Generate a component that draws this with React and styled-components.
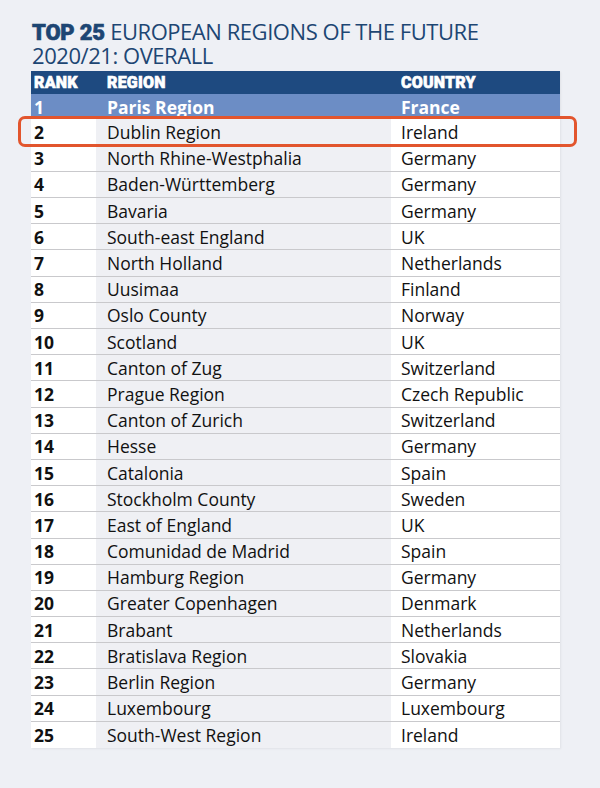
import React from 'react';
import styled, { createGlobalStyle } from 'styled-components';

const rows = [
  ['Dublin Region', 'Ireland'],
  ['North Rhine-Westphalia', 'Germany'],
  ['Baden-Württemberg', 'Germany'],
  ['Bavaria', 'Germany'],
  ['South-east England', 'UK'],
  ['North Holland', 'Netherlands'],
  ['Uusimaa', 'Finland'],
  ['Oslo County', 'Norway'],
  ['Scotland', 'UK'],
  ['Canton of Zug', 'Switzerland'],
  ['Prague Region', 'Czech Republic'],
  ['Canton of Zurich', 'Switzerland'],
  ['Hesse', 'Germany'],
  ['Catalonia', 'Spain'],
  ['Stockholm County', 'Sweden'],
  ['East of England', 'UK'],
  ['Comunidad de Madrid', 'Spain'],
  ['Hamburg Region', 'Germany'],
  ['Greater Copenhagen', 'Denmark'],
  ['Brabant', 'Netherlands'],
  ['Bratislava Region', 'Slovakia'],
  ['Berlin Region', 'Germany'],
  ['Luxembourg', 'Luxembourg'],
  ['South-West Region', 'Ireland'],
];

const GlobalStyle = createGlobalStyle`
  html, body {
    margin: 0;
    padding: 0;
    background: #eef0f5;
  }
`;

const App = () => {
  return (
    <Page>
      <GlobalStyle />
      <Title>
        <strong>TOP 25</strong> EUROPEAN REGIONS OF THE FUTURE
        <br />
        2020/21: OVERALL
      </Title>
      <Table>
        <thead>
          <HeadRow>
            <HeadCell>RANK</HeadCell>
            <HeadCell>REGION</HeadCell>
            <HeadCell>COUNTRY</HeadCell>
          </HeadRow>
        </thead>
        <tbody>
          <LeadRow>
            <RankCell>1</RankCell>
            <RegionCell>Paris Region</RegionCell>
            <CountryCell>France</CountryCell>
          </LeadRow>
          {rows.map(([region, country], i) => (
            <Row key={region} $highlight={i === 0}>
              <RankCell>{i + 2}</RankCell>
              <RegionCell>{region}</RegionCell>
              <CountryCell>{country}</CountryCell>
            </Row>
          ))}
        </tbody>
      </Table>
    </Page>
  );
};

const Page = styled.div`
  width: 600px;
  height: 788px;
  box-sizing: border-box;
  padding: 20px 0 0 31px;
  background: #eef0f5;
  font-family: 'Open Sans', 'Noto Sans', sans-serif;
`;

const Title = styled.h1`
  margin: 0 0 5px 1px;
  font-family: 'Open Sans', sans-serif;
  font-weight: 400;
  font-size: 22px;
  line-height: 22px;
  letter-spacing: -0.45px;
  color: #1d4673;

  strong {
    font-family: 'Roboto', sans-serif;
    font-weight: 900;
    letter-spacing: -0.2px;
    -webkit-text-stroke: 0.6px #1d4673;
  }
`;

const Table = styled.table`
  width: 529px;
  border-collapse: collapse;
  table-layout: fixed;
  box-shadow: 1px 1px 2px rgba(0, 0, 0, 0.06);

  td:nth-child(1), th:nth-child(1) {
    width: 62px;
    padding-left: 3px;
  }
  td:nth-child(2), th:nth-child(2) {
    width: 284px;
    padding-left: 11px;
  }
  td:nth-child(3), th:nth-child(3) {
    padding-left: 10px;
  }
`;

const HeadRow = styled.tr`
  height: 23px;
  background: #1e4a80;
`;

const HeadCell = styled.th`
  text-align: left;
  padding: 0;
  font-family: 'Roboto', sans-serif;
  font-weight: 900;
  font-size: 16px;
  line-height: 23px;
  letter-spacing: 0.2px;
  color: #ffffff;
  -webkit-text-stroke: 0.6px #ffffff;
  vertical-align: middle;
`;

const Cell = styled.td`
  padding: 0;
  font-size: 17.5px;
  line-height: 24px;
  color: #111111;
  white-space: nowrap;
  vertical-align: middle;
`;

const RankCell = styled(Cell)`
  font-weight: 700;
  background: #ffffff;
`;

const RegionCell = styled(Cell)`
  background: #eff0f4;
`;

const CountryCell = styled(Cell)`
  background: #ffffff;
`;

const LeadRow = styled.tr`
  height: 25px;

  td {
    background: #6c8dc5;
    color: #ffffff;
    font-weight: 700;
  }
`;

const Row = styled.tr`
  height: 26.2px;
  border-top: ${({ $highlight }) => ($highlight ? 'none' : '1px solid #c9c9cc')};

  ${({ $highlight }) =>
    $highlight &&
    `
    td:first-child { position: relative; }
    td:first-child::after {
      content: '';
      position: absolute;
      box-sizing: border-box;
      left: -13px;
      top: -3px;
      width: 559px;
      height: 31px;
      border: 3px solid #e2552d;
      border-radius: 7px;
      pointer-events: none;
    }
  `}
`;

export default App;
